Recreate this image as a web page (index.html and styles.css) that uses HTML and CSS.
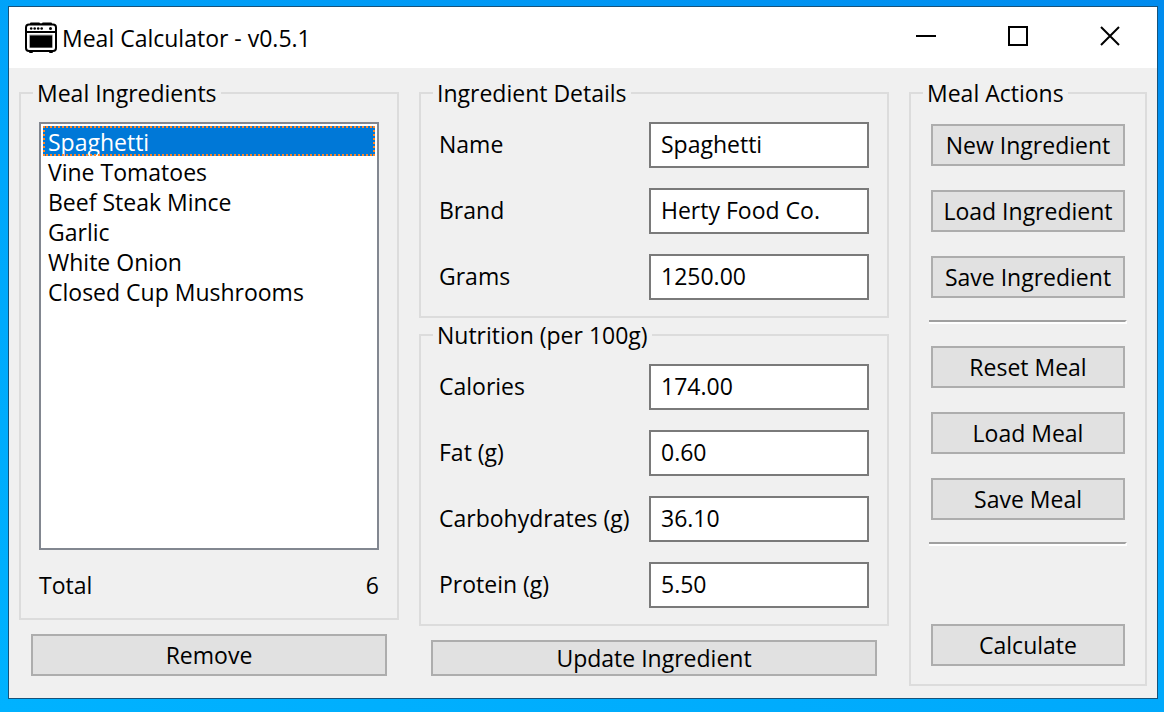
FILE: index.html
```html
<!DOCTYPE html>
<html lang="en">
<head>
<meta charset="utf-8">
<title>Meal Calculator</title>
<link rel="stylesheet" href="styles.css">
</head>
<body>
<main class="window">
  <header class="titlebar">
    <svg class="app-icon" viewBox="0 0 32 32" aria-hidden="true">
      <path d="M5 3V1.500Q5 .5 6 .5h8q1 0 1 1h2q0-1 1-1h8q1 0 1 1V3z"/>
      <path d="M4 28h4v2q0 1-1 1H5q-1 0-1-1zM24 28h4v2q0 1-1 1h-2q-1 0-1-1z"/>
      <rect x="1" y="2.500" width="30" height="26.500" rx="3" fill="#fff" stroke="#000" stroke-width="2"/>
      <path d="M1 10h30" stroke="#000" stroke-width="2"/>
      <circle cx="6.200" cy="6.500" r="1.300"/><circle cx="9.700" cy="6.500" r="1.300"/>
      <circle cx="13.200" cy="6.500" r="1.300"/><circle cx="16.700" cy="6.500" r="1.300"/>
      <circle cx="25.500" cy="6.500" r="1.500"/>
      <rect x="4" y="12.500" width="24" height="13.500" rx="1" fill="#aaa"/>
      <rect x="5" y="13.500" width="22" height="12"/>
    </svg>
    <h1 class="title">Meal Calculator - v0.5.1</h1>
    <div class="controls">
      <button class="control" type="button" aria-label="Minimize"><svg viewBox="0 0 20 20"><path d="M0 10h20"/></svg></button>
      <button class="control" type="button" aria-label="Maximize"><svg viewBox="0 0 20 20"><path d="M1 1h18v18H1z"/></svg></button>
      <button class="control" type="button" aria-label="Close"><svg viewBox="0 0 20 20"><path d="M1 1l18 18M19 1L1 19"/></svg></button>
    </div>
  </header>
  <form class="content">
    <section class="column">
      <fieldset class="group group-fill">
        <legend class="legend">Meal Ingredients</legend>
        <div class="stack">
          <select class="listbox" size="6" aria-label="Meal Ingredients">
            <option class="item" selected>Spaghetti</option>
            <option class="item">Vine Tomatoes</option>
            <option class="item">Beef Steak Mince</option>
            <option class="item">Garlic</option>
            <option class="item">White Onion</option>
            <option class="item">Closed Cup Mushrooms</option>
          </select>
          <div class="total"><span>Total</span><span>6</span></div>
        </div>
      </fieldset>
      <button class="button button-wide" type="button">Remove</button>
    </section>
    <section class="column">
      <fieldset class="group">
        <legend class="legend">Ingredient Details</legend>
        <div class="fields">
          <label class="label" for="name">Name</label><input class="input" id="name" value="Spaghetti">
          <label class="label" for="brand">Brand</label><input class="input" id="brand" value="Herty Food Co.">
          <label class="label" for="grams">Grams</label><input class="input" id="grams" value="1250.00">
        </div>
      </fieldset>
      <fieldset class="group group-next">
        <legend class="legend">Nutrition (per 100g)</legend>
        <div class="fields">
          <label class="label" for="calories">Calories</label><input class="input" id="calories" value="174.00">
          <label class="label" for="fat">Fat (g)</label><input class="input" id="fat" value="0.60">
          <label class="label" for="carbs">Carbohydrates (g)</label><input class="input" id="carbs" value="36.10">
          <label class="label" for="protein">Protein (g)</label><input class="input" id="protein" value="5.50">
        </div>
      </fieldset>
      <button class="button button-wide button-low" type="button">Update Ingredient</button>
    </section>
    <section class="column column-actions">
      <fieldset class="group group-fill">
        <legend class="legend">Meal Actions</legend>
        <div class="actions">
          <button class="button" type="button">New Ingredient</button>
          <button class="button" type="button">Load Ingredient</button>
          <button class="button" type="button">Save Ingredient</button>
          <hr class="separator">
          <button class="button" type="button">Reset Meal</button>
          <button class="button" type="button">Load Meal</button>
          <button class="button" type="button">Save Meal</button>
          <hr class="separator">
          <button class="button button-last" type="button">Calculate</button>
        </div>
      </fieldset>
    </section>
  </form>
</main>
</body>
</html>
```
FILE: styles.css
```css
* {
  box-sizing: border-box;
}

body {
  margin: 0;
  min-height: 100vh;
  padding: 6px 6px 13px 8px;
  display: flex;
  background: linear-gradient(20deg, #00b2ff 0%, #00a4fa 60%, #008bee 100%);
  color: #000;
  font: 23px/26px "Open Sans", "Noto Sans", sans-serif;
}

button,
input,
select {
  font: inherit;
  color: inherit;
}

.window {
  flex: 1;
  display: flex;
  flex-direction: column;
  background: #f0f0f0;
  border: 1px solid #17527a;
}

.titlebar {
  display: flex;
  align-items: center;
  height: 61px;
  padding: 0 1px 0 16px;
  background: #fff;
}

.app-icon {
  width: 32px;
  height: 32px;
}

.title {
  flex: 1;
  margin: 0 0 0 5px;
  font-size: 23px;
  font-weight: 400;
}

.controls {
  display: flex;
  align-self: stretch;
}

.control {
  width: 92px;
  padding: 0 0 4px;
  border: 0;
  background: none;
}

.control svg {
  display: block;
  width: 20px;
  height: 20px;
  margin: 0 auto;
  fill: none;
  stroke: #000;
  stroke-width: 2;
}

.content {
  flex: 1;
  display: grid;
  grid-template-columns: 380fr 470fr 238fr;
  gap: 20px;
  padding: 12px 10px;
}

.column {
  display: flex;
  flex-direction: column;
  min-width: 0;
  padding-bottom: 10px;
}

.column-actions {
  padding-bottom: 0;
}

.group {
  min-width: 0;
  margin: 0;
  padding: 16px 18px;
  border: 2px solid #dcdcdc;
}

.group-fill {
  flex: 1;
  display: flex;
  flex-direction: column;
}

.group-next {
  margin-top: 4px;
}

.legend {
  margin-left: -6px;
  padding: 0 4px;
}

.stack,
.actions {
  flex: 1;
  display: flex;
  flex-direction: column;
}

.listbox {
  flex: 1;
  width: 100%;
  padding: 2px;
  border: 2px solid #828790;
  border-radius: 0;
  background: #fff;
  outline: 0;
  overflow: hidden;
}

.item {
  height: 30px;
  padding: 0 5px;
}

.item:checked {
  outline: 2px dotted #ff8728;
  outline-offset: -2px;
  background: #0078d7 linear-gradient(#0078d7, #0078d7);
  color: #fff;
}

.total {
  display: flex;
  justify-content: space-between;
  margin-top: 18px;
  line-height: 34px;
}

.fields {
  display: grid;
  grid-template-columns: 1fr 220px;
  row-gap: 20px;
  align-items: center;
}

.label {
  padding-bottom: 3px;
}

.input {
  width: 100%;
  height: 46px;
  padding: 0 10px 3px;
  border: 2px solid #7a7a7a;
  border-radius: 0;
  background: #fff;
}

.actions {
  gap: 20px;
}

.button {
  height: 42px;
  margin: 2px;
  padding: 0;
  border: 2px solid #adadad;
  border-radius: 0;
  background: #e1e1e1;
  white-space: nowrap;
}

.button-wide {
  margin: 14px 12px 0;
}

.button-low {
  height: 36px;
}

.button-last {
  margin-top: auto;
}

.separator {
  width: 100%;
  height: 4px;
  margin: 0;
  border: 0;
  border-top: 2px solid #a0a0a0;
  border-right: 2px solid #fff;
  background: #fff;
}
```
